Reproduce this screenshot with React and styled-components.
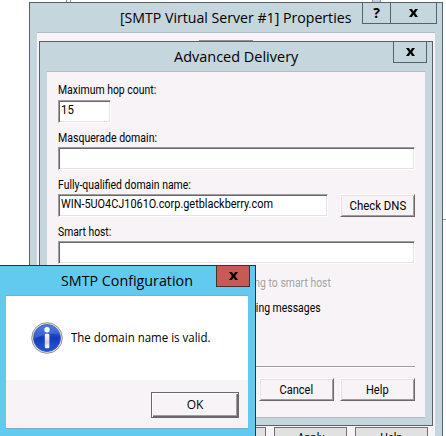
import React from "react";
import styled, { createGlobalStyle } from "styled-components";

const Global = createGlobalStyle`
  * { box-sizing: border-box; }
  html, body { margin: 0; padding: 0; overflow: hidden; background: #fff; }
`;

const Desktop = styled.main`
  position: relative;
  width: 446px;
  height: 436px;
  overflow: hidden;
  background: #fff;
  color: #000;
  font: 12px/14px Roboto, Arial, sans-serif;
  white-space: nowrap;
`;

const Strip = styled.div`
  position: absolute;
  top: 0;
  left: ${(p) => p.$x}px;
  width: ${(p) => p.$w}px;
  height: 3px;
  background: ${(p) => p.$fill || "#fff"};
  border: solid #8e8e9c;
  border-width: 0 1px;
`;

const EdgeLine = styled.div`
  position: absolute;
  left: 443px;
  top: 219px;
  width: 3px;
  height: 1px;
  background: #9d99a2;
`;

/* Condenses a run of text horizontally, keeping its height. */
const Condensed = styled.span`
  display: inline-block;
  transform: scaleX(${(p) => p.$k || 0.87});
  transform-origin: ${(p) => p.$from || "left"} center;
`;

const Window = styled.section`
  position: absolute;
  left: ${(p) => p.$x}px;
  top: ${(p) => p.$y}px;
  width: ${(p) => p.$w}px;
  height: ${(p) => p.$h}px;
  display: flex;
  flex-direction: column;
  padding: 0 7px 7px;
  border: 1px solid ${(p) => (p.$active ? "#24323a" : "#566265")};
  background: ${(p) => (p.$active ? "#63caef" : "#c5d6dd")};
`;

const TitleBar = styled.header`
  position: relative;
  flex: none;
  height: 29px;
  display: flex;
  align-items: flex-start;
  padding: 4px 0 0 ${(p) => p.$indent}px;
  font: 15px/20px "Open Sans", "Noto Sans", sans-serif;
`;

const Caption = styled.div`
  position: absolute;
  top: -1px;
  right: -2px;
  height: 22px;
  display: flex;
  border: 1px solid ${(p) => (p.$danger ? "#432e30" : "#566265")};
  background: ${(p) => (p.$danger ? "#c65a55" : "transparent")};
`;

const CaptionButton = styled.button`
  width: ${(p) => p.$w}px;
  padding: 0;
  border: 0;
  border-left: ${(p) => (p.$divided ? "1px solid #566265" : "0")};
  background: transparent;
  color: #000;
  display: flex;
  justify-content: center;
  align-items: center;
  font: bold 14px/18px "Open Sans", sans-serif;
`;

const Client = styled.div`
  flex: 1;
  min-height: 0;
  display: flex;
  flex-direction: column;
  border-top: 1px solid ${(p) => (p.$active ? "#6fb1d2" : "#afbec6")};
  border-bottom: 1px solid ${(p) => (p.$active ? "#6fb1d2" : "#afbec6")};
  background: #f7f3f7;
  padding: ${(p) => p.$pad || "0"};
`;

const TabTop = styled.div`
  width: 54px;
  height: 2px;
  margin: 7px 0 0 162px;
  background: #8f8d91;
`;

const SheetButtons = styled.div`
  display: flex;
  gap: 8px;
  margin-top: 385px;
  padding-left: 156px;
`;

const SheetButton = styled.button`
  flex: none;
  width: 73px;
  height: 23px;
  padding: 0 0 2px;
  border: 1px solid #6f6f71;
  background: #e1e1e1;
  color: #000;
  font: 12px/14px Roboto, sans-serif;
`;

const Label = styled.label`
  display: block;
  height: 14px;
  margin: ${(p) => (p.$raised ? "-1px 0 3px" : "0 0 2px")};
`;

const Field = styled.div`
  height: 23px;
  width: ${(p) => p.$w}px;
  padding: 2px;
  border: 1px solid;
  border-color: #a09da0 #fff #fff #a09da0;
  box-shadow: inset 1px 1px #696969, inset -1px -1px #e3e3e3;
  background: #fff;
`;

const Group = styled.div`
  margin-bottom: 8px;
`;

const Row = styled.div`
  display: flex;
  gap: 12px;
`;

const PushButton = styled.button`
  flex: none;
  width: 75px;
  height: 23px;
  padding: 0;
  border: 1px solid;
  border-color: #fff #696969 #696969 #fff;
  box-shadow: inset 1px 1px #e3e3e3, inset -1px -1px #a09da0;
  background: #f7f3f7;
  color: #000;
  font: 12px/14px Roboto, sans-serif;
`;

const OkButton = styled(PushButton)`
  width: 88px;
  height: 26px;
  border-color: #696969;
  box-shadow: inset 1px 1px #fff, inset -1px -1px #696969, inset -2px -2px #a09da0;
  font: 12px/16px "Open Sans", sans-serif;
`;

const Option = styled.div`
  height: 14px;
  width: ${(p) => p.$w}px;
  margin-top: ${(p) => p.$gap}px;
  display: flex;
  justify-content: flex-end;
  color: ${(p) => (p.$disabled ? "#a3a0a4" : "#000")};
  text-shadow: ${(p) => (p.$disabled ? "1px 1px #fff" : "none")};
`;

const Divider = styled.div`
  height: 2px;
  width: 357px;
  margin-top: 51px;
  background: #a09da0;
  border-bottom: 1px solid #fff;
`;

const Actions = styled.footer`
  display: flex;
  justify-content: flex-end;
  gap: 6px;
  width: 357px;
  margin-top: 10px;
`;

const Message = styled.div`
  height: 84px;
  display: flex;
  align-items: center;
  gap: 8px;
  padding-left: 25px;
  background: #fff;
  font: 12px/16px "Open Sans", sans-serif;
`;

const MessageActions = styled.footer`
  display: flex;
  justify-content: flex-end;
  padding: 12px 9px 0 0;
`;

function Cross() {
  return (
    <svg width="9" height="8" viewBox="0 0 10 9" preserveAspectRatio="none" aria-label="Close">
      <path d="M0 0h3.3l1.7 2.7L6.7 0H10L6.8 4.5 10 9H6.7L5 6.3 3.3 9H0l3.2-4.5z" fill="#000" />
    </svg>
  );
}

function InfoIcon() {
  return (
    <svg width="32" height="32" viewBox="0 0 32 32" aria-label="Information">
      <defs>
        <linearGradient id="ball" x1="0" y1="0" x2="0" y2="1">
          <stop offset="0" stopColor="#3d68d8" />
          <stop offset=".5" stopColor="#153bbd" />
          <stop offset="1" stopColor="#2157d6" />
        </linearGradient>
        <linearGradient id="stem" x1="0" y1="0" x2="0" y2="1">
          <stop offset="0" stopColor="#fff" />
          <stop offset=".6" stopColor="#d0d0d2" />
          <stop offset="1" stopColor="#fff" />
        </linearGradient>
      </defs>
      <circle cx="16" cy="16" r="15.3" fill="#e4e4e4" stroke="#929292" strokeWidth="1" />
      <circle cx="16" cy="16" r="13.5" fill="url(#ball)" stroke="#3157ad" strokeWidth=".8" />
      <path d="M3 17C3 9 8 3 16 3s12 4 13 9c-7-1-20 1-26 5z" fill="#789ae8" opacity=".35" />
      <circle cx="16" cy="7.7" r="2.7" fill="#fff" />
      <rect x="13.8" y="11.7" width="4.6" height="14.6" rx="1.2" fill="url(#stem)" />
    </svg>
  );
}

export default function App() {
  return (
    <Desktop>
      <Global />
      <Strip $x={66} $w={5} />
      <Strip $x={372} $w={9} $fill="#c5d6dd" />
      <EdgeLine />

      <Window $x={29} $y={2} $w={414} $h={462}>
        <TitleBar $indent={83}>
          <Condensed $k={0.942}>[SMTP Virtual Server #1] Properties</Condensed>
          <Caption>
            <CaptionButton $w={27}>?</CaptionButton>
            <CaptionButton $w={46} $divided><Cross /></CaptionButton>
          </Caption>
        </TitleBar>
        <Client>
          <TabTop />
          <SheetButtons>
            <SheetButton />
            <SheetButton><Condensed $k={0.9} $from="center">Apply</Condensed></SheetButton>
            <SheetButton><Condensed $k={0.9} $from="center">Help</Condensed></SheetButton>
          </SheetButtons>
        </Client>
      </Window>

      <Window $x={39} $y={41} $w={394} $h={385}>
        <TitleBar $indent={127}>
          <Condensed $k={0.965}>Advanced Delivery</Condensed>
          <Caption>
            <CaptionButton $w={32}><Cross /></CaptionButton>
          </Caption>
        </TitleBar>
        <Client $pad="12px 0 0 11px">
          <Group>
            <Label $raised><Condensed>Maximum hop count:</Condensed></Label>
            <Field $w={53}><Condensed $k={0.95}>15</Condensed></Field>
          </Group>
          <Group>
            <Label><Condensed $k={0.88}>Masquerade domain:</Condensed></Label>
            <Field $w={357} />
          </Group>
          <Group>
            <Label><Condensed>Fully-qualified domain name:</Condensed></Label>
            <Row>
              <Field $w={270}>
                <Condensed $k={0.908}>WIN-5UO4CJ1061O.corp.getblackberry.com</Condensed>
              </Field>
              <PushButton><Condensed $k={0.95} $from="center">Check DNS</Condensed></PushButton>
            </Row>
          </Group>
          <Group>
            <Label><Condensed $k={0.86}>Smart host:</Condensed></Label>
            <Field $w={357} />
          </Group>
          <Option $w={273} $gap={4} $disabled>
            <Condensed $from="right">sending to smart host</Condensed>
          </Option>
          <Option $w={263} $gap={11}>
            <Condensed $from="right">incoming messages</Condensed>
          </Option>
          <Divider />
          <Actions>
            <PushButton><Condensed $k={0.92} $from="center">Cancel</Condensed></PushButton>
            <PushButton><Condensed $k={0.92} $from="center">Help</Condensed></PushButton>
          </Actions>
        </Client>
      </Window>

      <Window $active $x={-2} $y={265} $w={258} $h={172}>
        <TitleBar $indent={55}>
          <Condensed $k={0.952}>SMTP Configuration</Condensed>
          <Caption $danger>
            <CaptionButton $w={32}><Cross /></CaptionButton>
          </Caption>
        </TitleBar>
        <Client $active>
          <Message>
            <InfoIcon />
            <Condensed $k={0.957}>The domain name is valid.</Condensed>
          </Message>
          <MessageActions>
            <OkButton>OK</OkButton>
          </MessageActions>
        </Client>
      </Window>
    </Desktop>
  );
}
